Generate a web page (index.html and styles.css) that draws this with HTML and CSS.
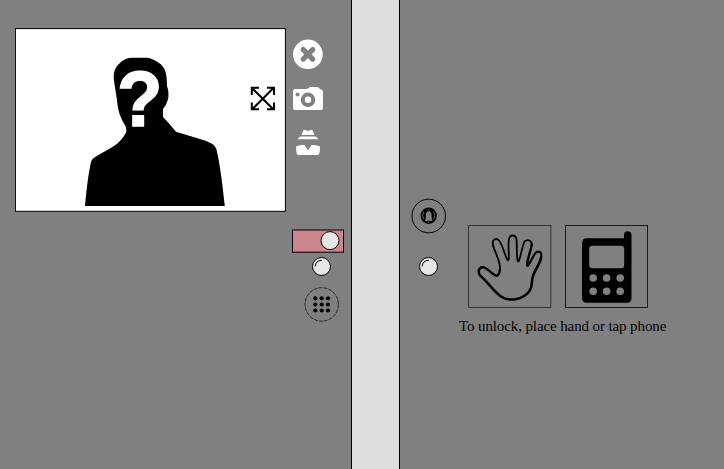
FILE: index.html
```html
<!DOCTYPE html>
<html lang="en">
<head>
<meta charset="utf-8">
<title>Door panel</title>
<link rel="stylesheet" href="styles.css">
</head>
<body>
<main class="door">
  <section class="inside">
    <svg class="camera-view" viewBox="15 28 271 184">
      <rect x="15.400" y="28.600" width="270" height="182.700" fill="#fff" stroke="#000"/>
      <path d="M85 206C86 194 88 175 91 162Q91.500 160 93 158.500C99 154 112 148 118 143Q124 137 126.300 132Q126.500 129 125.500 126C121 119 118 112 117 100L114 81C113 72 115 67 121 62Q127 57.500 132 57.800H147Q153 58.500 159 63C165 67 167 73 167 86Q169.500 93 167.800 100Q166 106 163 109V117L169 123.500L176 131.800L204 140.300C212 143 216.500 146 217 152C219 160 221 174 222 182L224.800 206Z"/>
      <text class="question" transform="translate(117 126.200) scale(.93 .98)" x="0" y="0">?</text>
      <path d="M252 88L273.500 109.500M273.500 88L252 109.500M251.800 95V87.800H259M267 87.800H274V95M251.800 102.500V109.200H259M267 109.200H274V102.500" fill="none" stroke="#000" stroke-width="2"/>
    </svg>
    <div class="tools">
      <svg class="tool-icons" viewBox="286 28 65 184" fill="#fff">
        <circle cx="307.900" cy="54.400" r="14.800"/>
        <path d="M303.200 49.600L312.700 59.100M312.700 49.600L303.200 59.100" stroke="#808080" stroke-width="5.200" stroke-linecap="round"/>
        <path d="M295 89H306Q308 89 308.500 88Q309 87 311 87H317Q319 87 319.500 88.500Q320 89.500 321 89.500Q323 89.700 323 92V108Q323 110 321 110H295Q293 110 293 108V91Q293 89 295 89Z"/>
        <circle cx="297.500" cy="94.500" r="2" fill="#808080"/>
        <circle cx="308" cy="99.800" r="5.200" stroke="#808080" stroke-width="4"/>
        <path d="M303.300 130.300Q304.300 129 306 130.300Q308 131.500 310 130.300Q311.800 129 312.600 130.300L314.500 135H301.500ZM300 136.500H316L318.500 139.300H297.500ZM296 146.500Q299 144.500 304.500 145L308 150.500L311.500 145Q317 144.500 320 146.500Q320 151 319 154.500L317.500 155H298.500L297 154.500Q296 151 296 146.500Z"/>
      </svg>
      <svg class="controls" viewBox="286 226 65 100">
        <rect x="292.500" y="230" width="51" height="22.200" fill="#ca858d" stroke="#000"/>
        <circle cx="330" cy="240.600" r="9" fill="#e6e6e6" stroke="#000"/>
        <circle cx="321.500" cy="266.500" r="9" fill="#e6e6e6" stroke="#000"/>
        <path d="M315.200 266.500Q315.500 260.500 322 260.200" fill="none" stroke="#000"/>
        <circle cx="321.700" cy="304.400" r="16.700" fill="none" stroke="#000" stroke-width=".7" stroke-dasharray="4 1"/>
        <g>
          <circle cx="315.300" cy="298.300" r="2.100"/><circle cx="321.700" cy="298.300" r="2.100"/><circle cx="328" cy="298.300" r="2.100"/>
          <circle cx="315.300" cy="304.500" r="2.100"/><circle cx="321.700" cy="304.500" r="2.100"/><circle cx="328" cy="304.500" r="2.100"/>
          <circle cx="315.300" cy="310.500" r="2.100"/><circle cx="321.700" cy="310.500" r="2.100"/><circle cx="328" cy="310.500" r="2.100"/>
        </g>
      </svg>
    </div>
  </section>
  <div class="wall"></div>
  <section class="outside">
    <svg class="bell" viewBox="410 196 38 84">
      <circle cx="428.700" cy="216" r="16.800" fill="none" stroke="#000"/>
      <circle cx="428.700" cy="215.800" r="8.200"/>
      <path d="M424.800 220.500Q426 219 425.800 215.500Q425.800 211.500 428.700 211.300Q431.600 211.500 431.600 215.500Q431.500 219 432.600 220.500L430.500 221.200Q428.700 219.800 427 221.200Z" fill="#808080"/>
      <path d="M423.800 211.500Q421.600 215.800 423.800 219M433.600 211.500Q435.800 215.800 433.600 219M428 209.800H429.500M428 222H429.500" fill="none" stroke="#777" stroke-width=".8"/>
      <circle cx="428.500" cy="266.500" r="9" fill="#e6e6e6" stroke="#000"/>
      <path d="M422.200 266.500Q422.500 260.500 429 260.200" fill="none" stroke="#000"/>
    </svg>
    <div class="unlock">
      <div class="methods">
        <svg class="method" viewBox="468 225 84 84">
          <rect x="468.700" y="225.500" width="82.200" height="82" fill="none" stroke="#000" stroke-width=".6"/>
          <g fill="none" stroke="#000" stroke-width="1.800" stroke-linejoin="round">
            <path d="M499.800 270C501 264 497.500 258 495.500 252C493 247 491.500 241 494.500 239.500C498 237.500 500.500 242 502 246C504 251 505.500 256 507.200 259.500Q508.500 261.500 508.800 258C509 252 508 246 508.800 240Q509.500 235.500 512.500 235.500Q516.200 235.500 516.600 240C517 247 516.500 254 517.500 260.500Q518.500 263 519.500 259C521.500 253 522 247 524.500 241.500Q526.500 239.500 529.500 240.500Q532.500 242 531.500 246C530 253 528 259 527 265"/>
            <path d="M531.500 243Q532 246 530.500 250C529 256 527 261 527 265.500Q528 266.500 529.500 263.500C532 259 534 254 536.500 252Q541 250.500 541.400 255C541 262 537 267 534 273" stroke-width="2.200"/>
            <path d="M541.300 257C540 264 535 270 533 276C531 282 533 286 529.500 291C523 300 509 302 501 296.500C493 291 487 281 480.500 276C477.500 272.500 478.500 268 482 267.300C487 266.500 492 275 496.500 275.700Q499.500 275 499.900 269.500" stroke-width="2.500"/>
          </g>
        </svg>
        <svg class="method" viewBox="565 225 84 84">
          <rect x="565.500" y="225.500" width="82" height="82" fill="none" stroke="#000" stroke-width=".8"/>
          <path fill-rule="evenodd" d="M587 238.300H624V235Q624 231.200 627.800 231.200Q631.500 231.200 631.500 235V298Q631.500 302.700 627 302.700H587Q582 302.700 582 298V243.500Q582 238.300 587 238.300ZM592.500 245.800Q589.200 245.800 589.200 249V265Q589.200 268.200 592.500 268.200H621Q624.200 268.200 624.200 265V249Q624.200 245.800 621 245.800Z"/>
          <g fill="#808080">
            <circle cx="593.200" cy="278" r="3.800"/><circle cx="606.600" cy="278" r="3.800"/><circle cx="620.200" cy="278" r="3.800"/>
            <circle cx="593.200" cy="291.300" r="3.800"/><circle cx="606.600" cy="291.300" r="3.800"/><circle cx="620.200" cy="291.300" r="3.800"/>
          </g>
        </svg>
      </div>
      <p class="hint">To unlock, place hand or tap phone</p>
    </div>
  </section>
</main>
</body>
</html>
```

FILE: styles.css
```css
body {
  margin: 0;
  background: #808080;
  font-family: "Liberation Serif", serif;
}
svg {
  display: block;
}
.door {
  display: grid;
  grid-template-columns: 351px 49px 324px;
  height: 469px;
  overflow: hidden;
}
.inside {
  display: flex;
  align-items: flex-start;
  padding: 28px 0 0 15px;
}
.camera-view {
  width: 271px;
  height: 184px;
}
.question {
  font: bold 80px "Liberation Sans", sans-serif;
  fill: #fff;
  stroke: #fff;
  stroke-width: 1.6px;
}
.tools {
  display: flex;
  flex-direction: column;
  gap: 14px;
}
.tool-icons {
  width: 65px;
  height: 184px;
}
.controls {
  width: 65px;
  height: 100px;
}
.wall {
  box-sizing: border-box;
  background: #ddd;
  border: solid #000;
  border-width: 0 1px;
}
.outside {
  display: flex;
  align-items: flex-start;
  padding: 196px 0 0 10px;
}
.bell {
  width: 38px;
  height: 84px;
}
.unlock {
  width: 230px;
  padding: 29px 0 0 11px;
}
.methods {
  display: flex;
  gap: 13px;
  padding-left: 9px;
}
.method {
  width: 84px;
  height: 84px;
}
.hint {
  margin: 8px 0 0;
  font-size: 15px;
  line-height: 18px;
  letter-spacing: -.11px;
  white-space: nowrap;
}
```
